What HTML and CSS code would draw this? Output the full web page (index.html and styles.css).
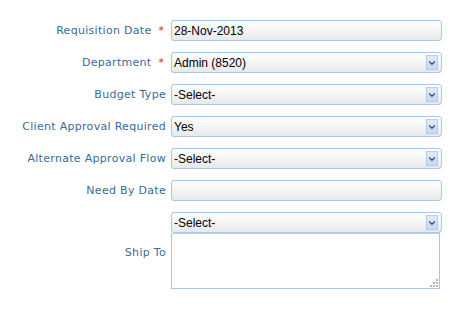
FILE: index.html
```html
<!DOCTYPE html>
<html>
<head>
<meta charset="utf-8">
<link rel="stylesheet" href="styles.css">
</head>
<body>
<form class="form">
  <div class="label">Requisition Date<span class="req">*</span></div>
  <div class="field input">28-Nov-2013</div>

  <div class="label">Department<span class="req">*</span></div>
  <div class="field select"><span class="val">Admin (8520)</span><span class="arrow"><svg width="8" height="6" viewBox="0 0 8 6"><path d="M1.2 1.5 L4 4.3 L6.8 1.5" fill="none" stroke="#3d5177" stroke-width="1.5"/></svg></span></div>

  <div class="label">Budget Type</div>
  <div class="field select"><span class="val">-Select-</span><span class="arrow"><svg width="8" height="6" viewBox="0 0 8 6"><path d="M1.2 1.5 L4 4.3 L6.8 1.5" fill="none" stroke="#3d5177" stroke-width="1.5"/></svg></span></div>

  <div class="label">Client Approval Required</div>
  <div class="field select"><span class="val">Yes</span><span class="arrow"><svg width="8" height="6" viewBox="0 0 8 6"><path d="M1.2 1.5 L4 4.3 L6.8 1.5" fill="none" stroke="#3d5177" stroke-width="1.5"/></svg></span></div>

  <div class="label">Alternate Approval Flow</div>
  <div class="field select"><span class="val">-Select-</span><span class="arrow"><svg width="8" height="6" viewBox="0 0 8 6"><path d="M1.2 1.5 L4 4.3 L6.8 1.5" fill="none" stroke="#3d5177" stroke-width="1.5"/></svg></span></div>

  <div class="label">Need By Date</div>
  <div class="field input"></div>

  <div class="label ship">Ship To</div>
  <div class="stack">
    <div class="field select"><span class="val">-Select-</span><span class="arrow"><svg width="8" height="6" viewBox="0 0 8 6"><path d="M1.2 1.5 L4 4.3 L6.8 1.5" fill="none" stroke="#3d5177" stroke-width="1.5"/></svg></span></div>
    <div class="textarea"><svg class="grip" width="9" height="9" viewBox="0 0 9 9"><g fill="#b8b8b8"><rect x="7" y="1" width="2" height="2"/><rect x="4" y="4" width="2" height="2"/><rect x="7" y="4" width="2" height="2"/><rect x="1" y="7" width="2" height="2"/><rect x="4" y="7" width="2" height="2"/><rect x="7" y="7" width="2" height="2"/></g></svg></div>
  </div>
</form>
</body>
</html>
```

FILE: styles.css
```css
html, body {
  margin: 0;
  padding: 0;
  background: #ffffff;
}

.form {
  display: grid;
  grid-template-columns: 166px 271px;
  column-gap: 5px;
  row-gap: 11px;
  padding-top: 20px;
  align-items: center;
}

.label {
  text-align: right;
  font-family: "DejaVu Sans", Verdana, sans-serif;
  font-size: 11px;
  letter-spacing: 0.3px;
  color: #386c97;
  white-space: nowrap;
}

.ship {
  padding-top: 4px;
}

.req {
  color: #e8202a;
  letter-spacing: 0;
  margin-left: 7px;
  margin-right: 2px;
}

.field {
  box-sizing: border-box;
  height: 21px;
  border: 1px solid #a9c6e2;
  border-radius: 3px;
  background: linear-gradient(#ffffff, #f6f6f6 40%, #e9e9e9);
  font-family: "Liberation Sans", Arial, sans-serif;
  font-size: 12px;
  color: #000;
  display: flex;
  align-items: center;
  padding-left: 2px;
}

.select {
  justify-content: space-between;
  padding-right: 3px;
}

.arrow {
  box-sizing: border-box;
  width: 12px;
  height: 15px;
  border: 1px solid #b7cdf2;
  background: linear-gradient(#e1eafd, #c5d6f6);
  display: flex;
  align-items: center;
  justify-content: center;
}

.arrow svg {
  display: block;
}

.stack {
  display: flex;
  flex-direction: column;
}

.textarea {
  box-sizing: border-box;
  width: 269px;
  height: 56px;
  border: 1px solid #a9c6e2;
  border-top-color: #b8d0e8;
  background: #fff;
  display: flex;
  justify-content: flex-end;
  align-items: flex-end;
  padding: 0 1px 1px 0;
}

.grip {
  display: block;
}
```
